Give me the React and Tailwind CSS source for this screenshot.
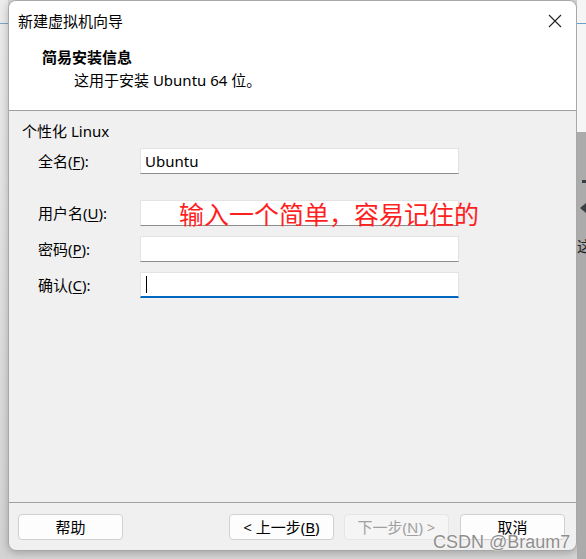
import React from 'react';

const font = { fontFamily: '"Noto Sans", "Noto Sans CJK SC", sans-serif' };

const U = ({ children }) => <span className="underline underline-offset-2">{children}</span>;

const Field = ({ label, k, value, focused, className = '' }) => (
  <div className={`flex items-center ${className}`}>
    <div className="w-[118px] pl-[16px] whitespace-nowrap">
      {label}(<U>{k}</U>):
    </div>
    <div
      className={`relative w-[319px] h-[26px] bg-white border border-[#e3e3e3] flex items-center pl-[4px] ${
        focused ? 'border-b-2 border-b-[#0067c0]' : 'border-b-[#8c8c8c]'
      }`}
    >
      {value}
      {focused && <div className="w-px h-[17px] bg-black ml-[1px]" />}
    </div>
  </div>
);

const Btn = ({ children, disabled }) => (
  <div
    className={`h-[26px] w-[105px] flex items-center justify-center rounded-[4px] border ${
      disabled
        ? 'bg-[#f5f5f5] border-[#e5e5e5] text-[#a0a0a0]'
        : 'bg-[#fdfdfd] border-[#d0d0d0] text-black'
    }`}
  >
    {children}
  </div>
);

export default function App() {
  return (
    <div className="relative w-[586px] h-[559px] bg-[#d6d6d6] overflow-hidden text-[15px] text-black flex" style={font}>
      {/* left strip of window behind */}
      <div className="w-[8px] h-full flex flex-col bg-gradient-to-b from-[#ececec] to-[#d4d4d4]">
        <div className="h-[24px] border-b border-[#7ea6c8]" />
      </div>

      {/* dialog */}
      <div className="w-[569px] h-[551px] flex flex-col bg-[#f0f0f0] border border-[#a8a8a8] rounded-[8px] overflow-hidden shadow-[0_2px_8px_rgba(0,0,0,0.25)]">
        <div className="h-[110px] bg-white border-b border-[#a0a0a0] flex flex-col">
          <div className="h-[40px] flex items-center justify-between pl-[9px] pr-[14px]">
            <span>新建虚拟机向导</span>
            <svg width="14" height="14" viewBox="0 0 14 14">
              <path d="M1 1L13 13M13 1L1 13" stroke="#222" strokeWidth="1.1" />
            </svg>
          </div>
          <div className="pl-[33px] font-bold leading-[20px] mt-[6px]">简易安装信息</div>
          <div className="pl-[65px] leading-[20px] mt-[3px]">这用于安装 Ubuntu 64 位。</div>
        </div>

        <div className="flex-1 flex flex-col pl-[13px] pt-[10px]">
          <div className="leading-[20px]">个性化 Linux</div>
          <Field label="全名" k="F" value="Ubuntu" className="mt-[7px]" />
          <Field label="用户名" k="U" value="" className="mt-[26px]" />
          <Field label="密码" k="P" value="" className="mt-[10px]" />
          <Field label="确认" k="C" value="" focused className="mt-[10px]" />
        </div>

        <div className="h-[48px] border-t border-[#a0a0a0] flex items-start pt-[11px] pl-[9px]">
          <Btn>帮助</Btn>
          <div className="ml-[106px]">
            <Btn>
              &lt; 上一步(<U>B</U>)
            </Btn>
          </div>
          <div className="ml-[10px]">
            <Btn disabled>
              下一步(<U>N</U>) &gt;
            </Btn>
          </div>
          <div className="ml-[11px]">
            <Btn>取消</Btn>
          </div>
        </div>
      </div>

      {/* right strip of window behind */}
      <div className="w-[9px] h-full flex flex-col">
        <div className="h-[132px] bg-[#f5f5f5] flex flex-col">
          <div className="h-[24px] border-b border-[#6aa0d0]" />
        </div>
        <div className="flex-1 bg-[#ababab] flex flex-col items-end">
          <div className="mt-[48px] w-[4px] h-[3px] bg-[#3a3f45]" />
          <div className="mt-[20px] w-0 h-0 border-y-[5px] border-y-transparent border-r-[6px] border-r-[#3a3f45]" />
          <div className="mt-[26px] text-[15px] leading-none -mr-[6px] text-[#222]">这</div>
        </div>
      </div>

      {/* red annotation */}
      <div
        className="absolute left-[179px] top-[198px] text-[25px] leading-[30px] text-[#ff1f1f] whitespace-nowrap"
        style={{ fontFamily: '"Noto Sans CJK SC", sans-serif' }}
      >
        输入一个简单，容易记住的
      </div>

      {/* watermark */}
      <div
        className="absolute left-[433px] top-[531px] text-[18px] leading-[22px] text-[#8e8e8e] whitespace-nowrap"
        style={{ fontFamily: '"Liberation Sans", Arial, sans-serif', textShadow: '0 0 2px #fff, 0 0 1px #fff' }}
      >
        CSDN @Braum7
      </div>
    </div>
  );
}
